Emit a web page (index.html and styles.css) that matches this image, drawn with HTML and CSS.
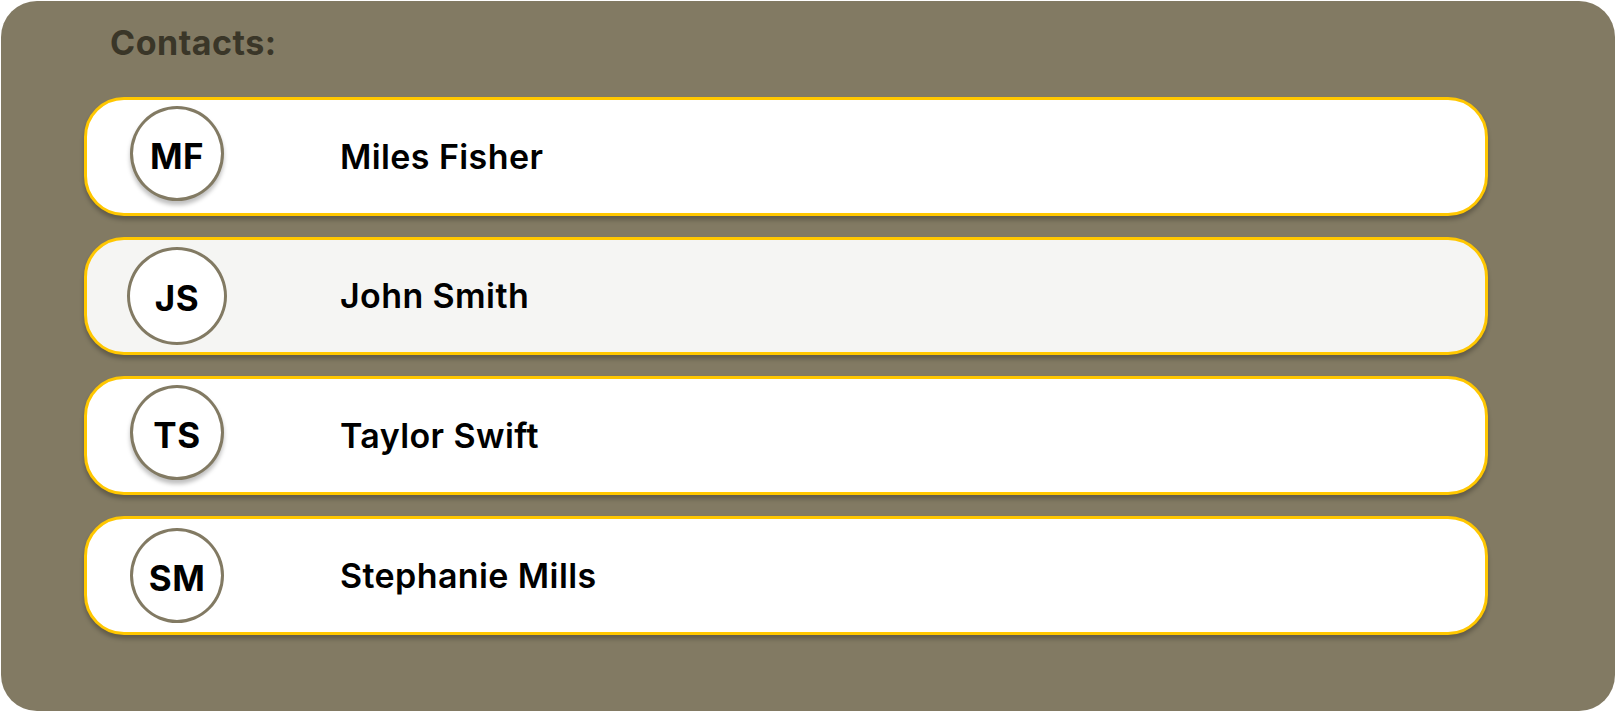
FILE: index.html
```html
<!DOCTYPE html>
<html lang="en">
<head>
<meta charset="utf-8">
<title>Contacts</title>
<link rel="stylesheet" href="styles.css">
</head>
<body>
<main class="panel">
  <h1 class="panel-title">Contacts:</h1>
  <ul class="contact-list">
    <li class="contact">
      <div class="avatar-slot"><span class="avatar avatar--raised">MF</span></div>
      <span class="contact-name">Miles Fisher</span>
    </li>
    <li class="contact contact--hover">
      <div class="avatar-slot"><span class="avatar avatar--large">JS</span></div>
      <span class="contact-name">John Smith</span>
    </li>
    <li class="contact">
      <div class="avatar-slot"><span class="avatar avatar--raised">TS</span></div>
      <span class="contact-name">Taylor Swift</span>
    </li>
    <li class="contact">
      <div class="avatar-slot"><span class="avatar">SM</span></div>
      <span class="contact-name">Stephanie Mills</span>
    </li>
  </ul>
</main>
</body>
</html>
```

FILE: styles.css
```css
* { box-sizing: border-box; }

html, body {
  margin: 0;
  padding: 0;
  background: #ffffff;
}

body {
  font-family: Inter, "Noto Sans", "Liberation Sans", sans-serif;
  padding: 1px;
}

.panel {
  width: 1614px;
  height: 710px;
  background: #827A63;
  border-radius: 36px;
  padding: 22px 0 0 83px;
}

.panel-title {
  margin: 0 0 34px 26px;
  font-size: 34px;
  line-height: 40px;
  font-weight: 700;
  letter-spacing: 0.5px;
  color: #3A3628;
}

.contact-list {
  list-style: none;
  margin: 0;
  padding: 0;
  display: flex;
  flex-direction: column;
  gap: 21px;
}

.contact {
  width: 1404px;
  height: 119px;
  background: #ffffff;
  border: 3px solid #FFC700;
  border-radius: 40px;
  box-shadow: 0 4px 4px rgba(0, 0, 0, 0.25);
  display: flex;
  align-items: center;
  padding-left: 40px;
}

.contact--hover {
  background: #F5F5F3;
  height: 118px;
}

.avatar-slot {
  width: 100px;
  display: flex;
  justify-content: center;
  flex-shrink: 0;
}

.avatar {
  width: 94px;
  height: 95px;
  border-radius: 50%;
  border: 3px solid #827A63;
  background: #ffffff;
  display: flex;
  align-items: center;
  justify-content: center;
  padding-top: 4px;
  font-size: 35px;
  font-weight: 700;
  letter-spacing: 0.5px;
  color: #000000;
}

.avatar--raised {
  box-shadow: 0 4px 4px rgba(0, 0, 0, 0.25);
  margin-top: -6px;
}

.avatar--large {
  width: 100px;
  height: 98px;
}

.contact-name {
  margin-left: 113px;
  font-size: 34px;
  font-weight: 600;
  letter-spacing: 0.4px;
  color: #000000;
  line-height: 40px;
}
```
